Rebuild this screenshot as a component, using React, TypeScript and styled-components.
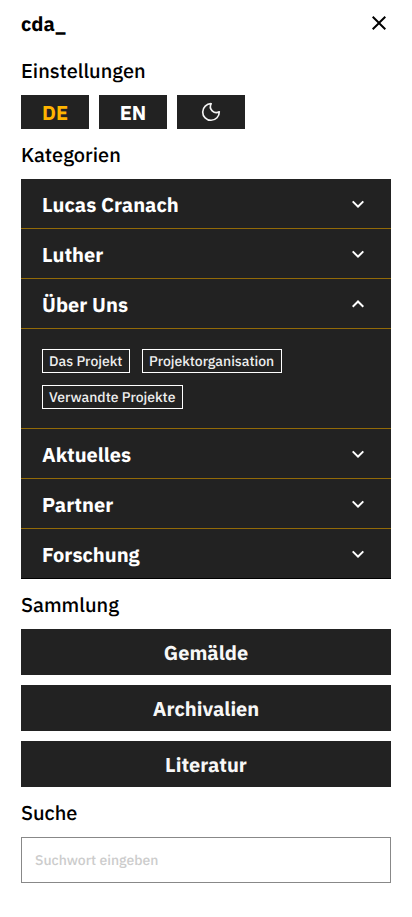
import React from "react";
import styled, { createGlobalStyle } from "styled-components";

const Global = createGlobalStyle`
  * { box-sizing: border-box; }
  body {
    margin: 0;
    background: #fff;
    color: #000;
    font-family: "IBM Plex Sans", Roboto, sans-serif;
    text-rendering: geometricPrecision;
    -webkit-font-smoothing: antialiased;
  }
  button, input { font: inherit; text-rendering: inherit; border-radius: 0; margin: 0; }
`;

const Page = styled.main`
  width: 100%;
  max-width: 412px;
  height: 917px;
  padding: 8px 21px 0;
`;

const Header = styled.header`
  display: flex;
  justify-content: space-between;
  height: 30px;
`;

const Logo = styled.div`
  font-size: 20px;
  font-weight: 700;
  line-height: 32px;
`;

const CloseButton = styled.button`
  width: 24px;
  height: 29px;
  padding: 0;
  border: 0;
  background: none;
  display: flex;
  align-items: center;
  justify-content: center;
`;

const Section = styled.section`
  display: flex;
  flex-direction: column;
`;

const Heading = styled.h2`
  margin: 0;
  height: 50px;
  padding-top: 12px;
  font-size: 20px;
  font-weight: 500;
  line-height: 28px;
`;

const Settings = styled(Section)`
  margin-top: 7px;
`;

const Options = styled.div`
  display: flex;
  gap: 10px;
`;

const OptionButton = styled.button<{ $active?: boolean }>`
  width: 68px;
  height: 34px;
  padding: 0;
  border: 0;
  background: #222;
  color: ${(p) => (p.$active ? "#ffb400" : "#fff")};
  font-size: 20px;
  font-weight: 700;
  display: flex;
  align-items: center;
  justify-content: center;
`;

const Accordion = styled.div`
  background: #222;
  color: #fff;
  border-bottom: 1px solid #000;
`;

const AccordionHead = styled.button`
  width: 100%;
  height: 49px;
  padding: 1px 21px 0;
  border: 0;
  background: none;
  color: inherit;
  display: flex;
  align-items: center;
  justify-content: space-between;
  font-size: 20px;
  font-weight: 700;
`;

const AccordionItem = styled.div`
  & + & { border-top: 1px solid #926a08; }
`;

const Tags = styled.div`
  height: 100px;
  padding: 20px 21px;
  border-top: 1px solid #926a08;
  display: flex;
  flex-wrap: wrap;
  align-content: flex-start;
  gap: 12px;
`;

const Tag = styled.a<{ $width: number }>`
  width: ${(p) => p.$width}px;
  height: 24px;
  border: 1px solid #fff;
  padding-left: 6px;
  font-size: 14px;
  font-weight: 500;
  line-height: 22px;
  white-space: nowrap;
  color: #eee;
`;

const Stack = styled.div`
  display: flex;
  flex-direction: column;
  gap: 10px;
`;

const WideButton = styled.button`
  height: 46px;
  padding: 0;
  border: 0;
  background: #222;
  color: #f7f7f7;
  font-size: 20px;
  font-weight: 700;
`;

const SearchInput = styled.input`
  width: 100%;
  height: 46px;
  border: 1px solid #888;
  padding: 0 13px;
  font-size: 14px;
  font-weight: 500;
  background: #fff;
  &::placeholder { color: #ccc; opacity: 1; }
`;

const Icon = styled.svg`
  display: block;
  width: 24px;
  height: 24px;
  fill: currentColor;
`;

const Chevron = ({ up = false }: { up?: boolean }) => (
  <Icon viewBox="0 0 24 24">
    <path
      d={
        up
          ? "M12 10.9 7.4 15.5 6 14.1l6-6 6 6-1.4 1.4z"
          : "m12 16.1-6-6 1.4-1.4 4.6 4.6 4.6-4.6 1.4 1.4z"
      }
    />
  </Icon>
);

const categories = [
  { name: "Lucas Cranach" },
  { name: "Luther" },
  { name: "Über Uns", open: true },
  { name: "Aktuelles" },
  { name: "Partner" },
  { name: "Forschung" },
];

const tags = [
  { name: "Das Projekt", width: 88 },
  { name: "Projektorganisation", width: 140 },
  { name: "Verwandte Projekte", width: 141 },
];

const collections = ["Gemälde", "Archivalien", "Literatur"];

export default function App() {
  return (
    <>
      <Global />
      <Page>
        <Header>
          <Logo>cda_</Logo>
          <CloseButton aria-label="Schließen">
            <Icon viewBox="0 0 24 24">
              <path d="M6.4 19 5 17.6l5.6-5.6L5 6.4 6.4 5l5.6 5.6L17.6 5 19 6.4 13.4 12l5.6 5.6-1.4 1.4-5.6-5.6z" />
            </Icon>
          </CloseButton>
        </Header>
        <Settings>
          <Heading>Einstellungen</Heading>
          <Options>
            <OptionButton $active>DE</OptionButton>
            <OptionButton>EN</OptionButton>
            <OptionButton aria-label="Dunkles Design">
              <Icon viewBox="0 0 24 24">
                <path
                  d="M12.2 3.7A8.3 8.3 0 1 0 20.3 11.8 5.95 5.95 0 0 1 12.2 3.7Z"
                  fill="none"
                  stroke="#f4f4f4"
                  strokeWidth="1.65"
                  strokeLinejoin="round"
                />
              </Icon>
            </OptionButton>
          </Options>
        </Settings>
        <Section>
          <Heading>Kategorien</Heading>
          <Accordion>
            {categories.map((c) => (
              <AccordionItem key={c.name}>
                <AccordionHead aria-expanded={!!c.open}>
                  {c.name}
                  <Chevron up={c.open} />
                </AccordionHead>
                {c.open && (
                  <Tags>
                    {tags.map((t) => (
                      <Tag key={t.name} $width={t.width}>{t.name}</Tag>
                    ))}
                  </Tags>
                )}
              </AccordionItem>
            ))}
          </Accordion>
        </Section>
        <Section>
          <Heading>Sammlung</Heading>
          <Stack>
            {collections.map((name) => (
              <WideButton key={name}>{name}</WideButton>
            ))}
          </Stack>
        </Section>
        <Section>
          <Heading>Suche</Heading>
          <SearchInput placeholder="Suchwort eingeben" />
        </Section>
      </Page>
    </>
  );
}
